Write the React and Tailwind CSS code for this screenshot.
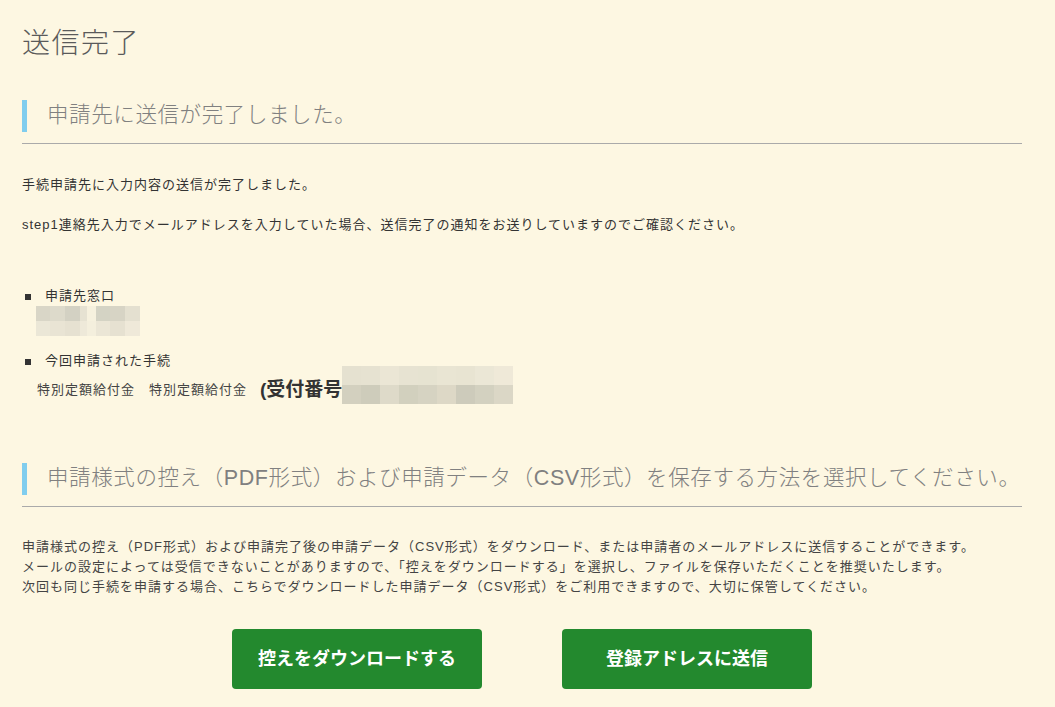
const font = {
  fontFamily: '"Liberation Sans", "Noto Sans CJK JP", sans-serif',
};

const officeBlur = [
  ["w-[14px] bg-[#d9d6c7]", "w-[14px] bg-[#ebe7d7]"],
  ["w-[15px] bg-[#dddacb]", "w-[15px] bg-[#e9e4d4]"],
  ["w-[15px] bg-[#d3d1c3]", "w-[15px] bg-[#e6e1d1]"],
  ["w-[7px] bg-[#e6e2d2]", "w-[7px] bg-[#eee9d9]"],
  ["w-[9px] bg-[#f6f1de]", "w-[9px] bg-[#f4efdd]"],
  ["w-[14px] bg-[#d4d3c4]", "w-[14px] bg-[#ebe6d6]"],
  ["w-[15px] bg-[#d7d4c5]", "w-[15px] bg-[#e6e1d1]"],
  ["w-[15px] bg-[#e4e0d0]", "w-[15px] bg-[#efe9d9]"],
];

const numberBlur = [
  ["bg-[#e5e1d0]", "bg-[#d3d0bf]"],
  ["bg-[#e6e2d1]", "bg-[#ceccbb]"],
  ["bg-[#ebe6d5]", "bg-[#dedac9]"],
  ["bg-[#e7e3d2]", "bg-[#d2d0be]"],
  ["bg-[#e6e3d1]", "bg-[#d6d3c2]"],
  ["bg-[#e9e5d3]", "bg-[#ddd8c6]"],
  ["bg-[#e8e4d2]", "bg-[#cdcbbb]"],
  ["bg-[#ebe7d6]", "bg-[#d3d1c0]"],
  ["bg-[#efe9d8]", "bg-[#dbd7c6]"],
];

function SectionHeading({ children, className = "" }) {
  return (
    <div className={`border-b border-[#aaaaaa] pb-[11px] ${className}`}>
      <h2 className="flex h-[32px] items-center whitespace-nowrap border-l-[5px] border-[#80cdee] pl-[20px] text-[21.5px] font-light leading-none tracking-[0.6px] text-[#808080]">
        {children}
      </h2>
    </div>
  );
}

export default function App() {
  return (
    <div
      className="min-h-screen bg-[#fdf7e2] pl-[22px] pr-[33px] pt-[28px] pb-[20px] text-[#333]"
      style={font}
    >
      <h1 className="text-[28px] font-light leading-[32px] tracking-[1.5px] text-[#5a5a5a]">
        送信完了
      </h1>

      <SectionHeading className="mt-[40px]">申請先に送信が完了しました。</SectionHeading>

      <div className="text-[13px] leading-[20px] tracking-[1px]">
        <p className="mt-[31px]">手続申請先に入力内容の送信が完了しました。</p>
        <p className="mt-[20px]">
          step1連絡先入力でメールアドレスを入力していた場合、送信完了の通知をお送りしていますのでご確認ください。
        </p>

        <div className="mt-[51px] flex items-center">
          <span className="ml-[3px] mt-[2px] h-[6px] w-[6px] bg-[#333]" />
          <span className="ml-[14px]">申請先窓口</span>
        </div>
        <div className="ml-[14px] flex">
          {officeBlur.map(([top, bottom], i) => (
            <div key={i} className="flex flex-col">
              <span className={`h-[15px] ${top}`} />
              <span className={`h-[15px] ${bottom}`} />
            </div>
          ))}
        </div>

        <div className="mt-[15px] flex items-center">
          <span className="ml-[3px] mt-[2px] h-[6px] w-[6px] bg-[#333]" />
          <span className="ml-[14px]">今回申請された手続</span>
        </div>
        <div className="-mt-[5px] flex items-end pl-[15px]">
          <span className="pb-[4px] text-[#444]">特別定額給付金　特別定額給付金</span>
          <span className="ml-[13px] pb-[3px] text-[19px] font-bold leading-[22px] tracking-normal">
            (受付番号
          </span>
          <div className="flex">
            {numberBlur.map(([top, bottom], i) => (
              <div key={i} className="flex w-[19px] flex-col">
                <span className={`h-[19px] ${top}`} />
                <span className={`h-[19px] ${bottom}`} />
              </div>
            ))}
          </div>
        </div>
      </div>

      <SectionHeading className="mt-[59px]">
        申請様式の控え（PDF形式）および申請データ（CSV形式）を保存する方法を選択してください。
      </SectionHeading>

      <div className="mt-[30px] text-[13px] leading-[20px] tracking-[1px] text-[#444]">
        <p>
          申請様式の控え（PDF形式）および申請完了後の申請データ（CSV形式）をダウンロード、または申請者のメールアドレスに送信することができます。
        </p>
        <p>
          メールの設定によっては受信できないことがありますので、「控えをダウンロードする」を選択し、ファイルを保存いただくことを推奨いたします。
        </p>
        <p>
          次回も同じ手続を申請する場合、こちらでダウンロードした申請データ（CSV形式）をご利用できますので、大切に保管してください。
        </p>
      </div>

      <div className="mt-[32px] flex justify-center gap-[80px]">
        <button className="h-[60px] w-[250px] rounded-[4px] bg-[#23892e] text-[18px] font-bold text-white">
          控えをダウンロードする
        </button>
        <button className="h-[60px] w-[250px] rounded-[4px] bg-[#23892e] text-[18px] font-bold text-white">
          登録アドレスに送信
        </button>
      </div>
    </div>
  );
}
